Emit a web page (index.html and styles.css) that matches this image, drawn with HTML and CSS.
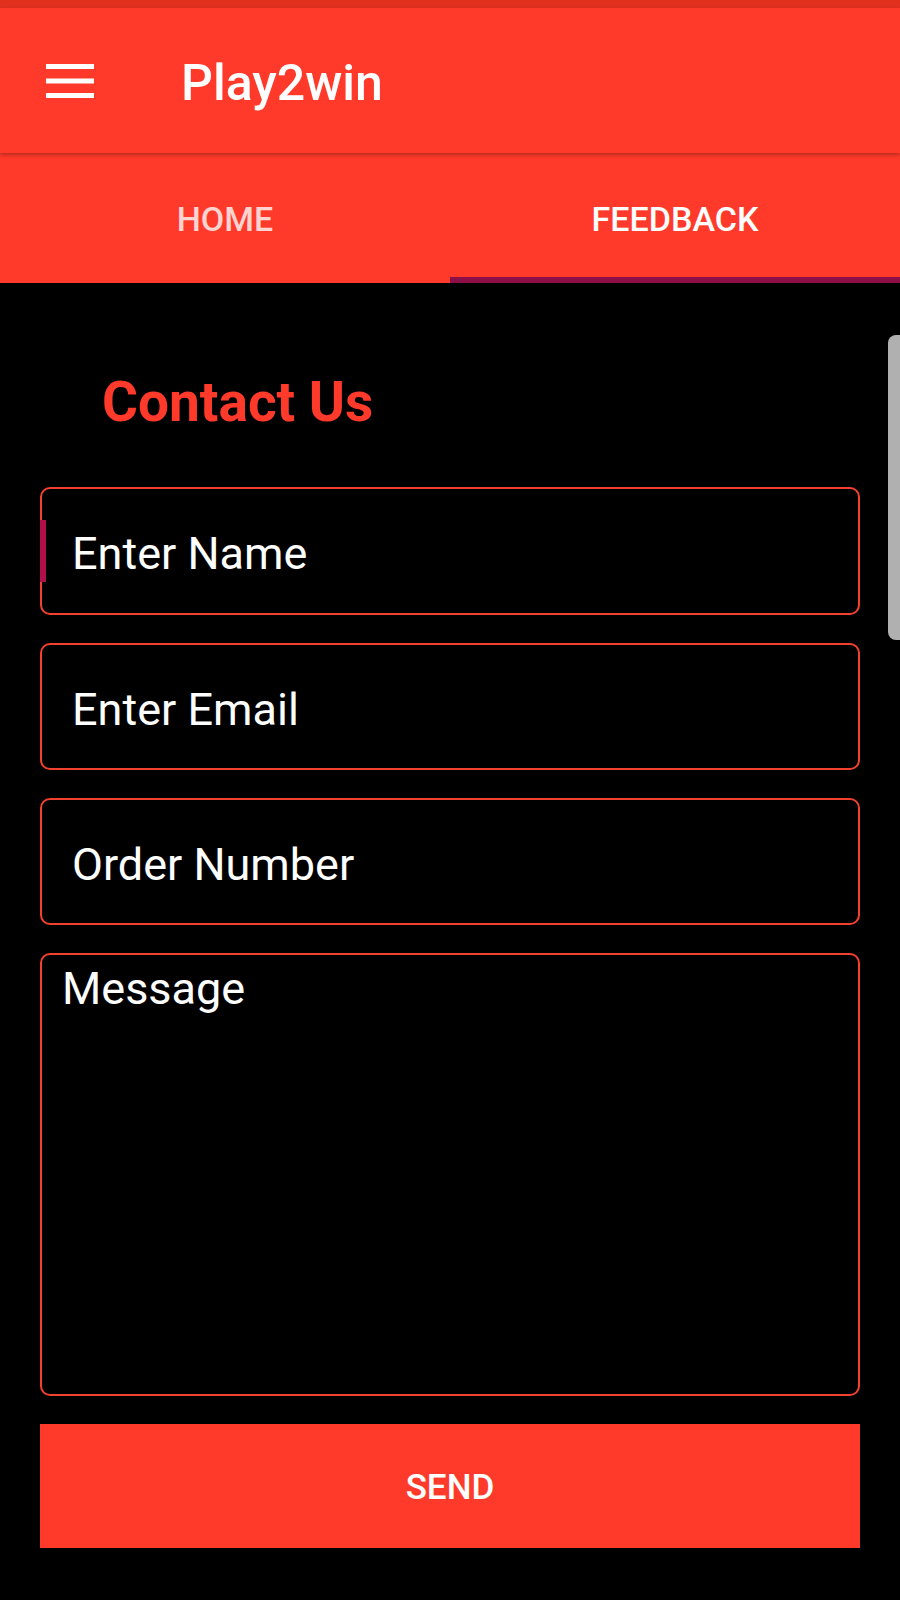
FILE: index.html
```html
<!DOCTYPE html>
<html lang="en">
<head>
<meta charset="utf-8">
<title>Play2win – Feedback</title>
<link rel="stylesheet" href="styles.css">
</head>
<body>
<div class="app">
  <div class="statusbar"></div>
  <header class="toolbar">
    <svg class="menu-icon" width="48" height="34" viewBox="0 0 48 34" aria-hidden="true">
      <rect x="0" y="0" width="48" height="5" fill="#fff"/>
      <rect x="0" y="14.5" width="48" height="5" fill="#fff"/>
      <rect x="0" y="29" width="48" height="5" fill="#fff"/>
    </svg>
    <h1 class="title">Play2win</h1>
  </header>
  <nav class="tabs">
    <div class="tab">HOME</div>
    <div class="tab active">FEEDBACK</div>
  </nav>
  <main class="content">
    <h2 class="heading">Contact Us</h2>
    <form class="form">
      <div class="field focused">Enter Name</div>
      <div class="field">Enter Email</div>
      <div class="field">Order Number</div>
      <div class="field message">Message</div>
      <div class="send">SEND</div>
    </form>
  </main>
  <div class="scrollbar"></div>
</div>
</body>
</html>
```
FILE: styles.css
```css
* { box-sizing: border-box; }
html, body {
  margin: 0;
  padding: 0;
  background: #000;
}
body {
  font-family: Roboto, "Noto Sans", "Liberation Sans", sans-serif;
  color: #fff;
}
.app {
  position: relative;
  width: 900px;
  height: 1600px;
  background: #000;
  overflow: hidden;
}
.statusbar {
  height: 8px;
  background: #e2301f;
}
.toolbar {
  position: relative;
  z-index: 1;
  height: 145px;
  background: #ff3a2a;
  display: flex;
  align-items: center;
  padding-left: 46px;
  box-shadow: 0 2px 4px rgba(0, 0, 0, 0.28);
}
.menu-icon { display: block; flex: none; }
.title {
  margin: 4px 0 0 87px;
  font-size: 50px;
  font-weight: 500;
  line-height: 1;
  color: #fff;
}
.tabs {
  display: flex;
  height: 130px;
  background: #ff3a2a;
}
.tab {
  flex: 1;
  display: flex;
  align-items: center;
  justify-content: center;
  padding-top: 8px;
  border-bottom: 6px solid transparent;
  font-size: 34px;
  font-weight: 500;
  line-height: 1;
  color: rgba(255, 255, 255, 0.78);
}
.tab.active {
  color: #fff;
  border-bottom-color: #8c0f48;
}
.content {
  padding: 92px 40px 0 40px;
}
.heading {
  margin: 0 0 58px 62px;
  font-size: 55px;
  font-weight: 700;
  line-height: 54px;
  color: #ff3a2a;
}
.form {
  display: flex;
  flex-direction: column;
  gap: 28px;
}
.field {
  position: relative;
  height: 127px;
  border: 2px solid #f2412e;
  border-radius: 10px;
  display: flex;
  align-items: center;
  padding: 5px 0 0 30px;
  font-size: 45px;
  line-height: 1;
  color: #fff;
}
.field.focused { height: 128px; }
.field.focused::before {
  content: "";
  position: absolute;
  left: -2px;
  top: 31px;
  width: 6px;
  height: 62px;
  background: #b0104a;
}
.field.message {
  height: 443px;
  align-items: flex-start;
  padding: 11px 0 0 20px;
}
.send {
  height: 124px;
  background: #ff3a2a;
  display: flex;
  align-items: center;
  justify-content: center;
  padding-top: 2px;
  font-size: 35px;
  font-weight: 500;
  line-height: 1;
  color: #fff;
}
.scrollbar {
  position: absolute;
  right: 0;
  top: 335px;
  width: 12px;
  height: 305px;
  background: #b0b0b0;
  border-radius: 8px 0 0 8px;
}
```
